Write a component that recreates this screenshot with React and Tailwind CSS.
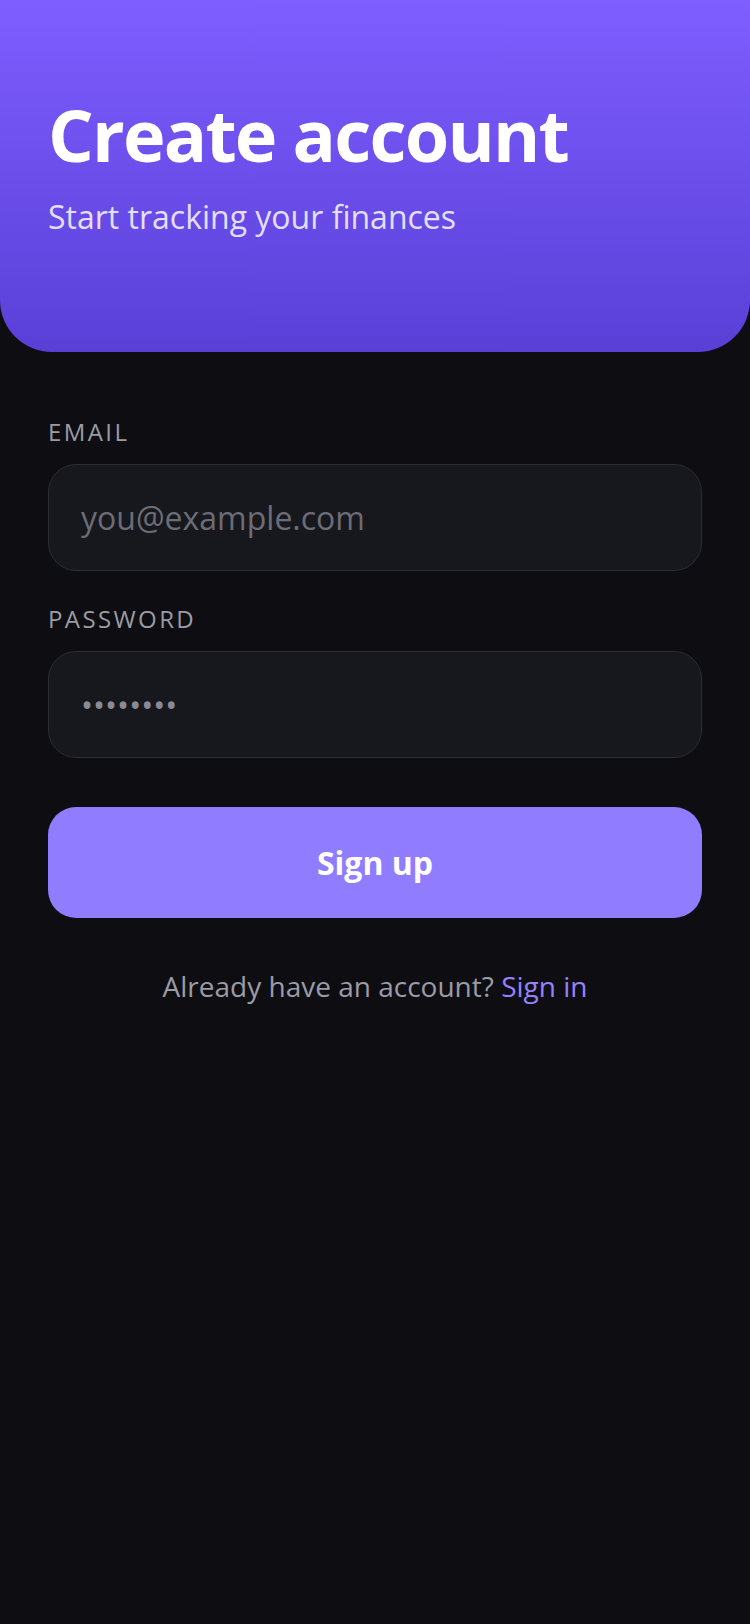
import { useState } from "react";

const SignUp = () => {
    const [email, setEmail] = useState("");
    const [password, setPassword] = useState("");

    return (
        <div className="min-h-[1624px] bg-[#0e0e12] font-['Open_Sans',sans-serif]">
            {/* Header */}
            <div className="h-[352px] rounded-b-[52px] bg-gradient-to-b from-[#7e5eff] to-[#5a3fd7] px-12 pt-[95px]">
                <h1 className="text-[72px] leading-[1.1] font-bold tracking-tight text-white">Create account</h1>
                <p className="mt-[23px] text-[32px] leading-[40px] text-[#e4dfff]">Start tracking your finances</p>
            </div>

            {/* Form */}
            <div className="px-12 pt-16">
                <label className="block mb-4 text-[24px] leading-[32px] tracking-widest text-[#9b9ba6]">EMAIL</label>
                <input
                    type="email"
                    value={email}
                    onChange={(e) => setEmail(e.target.value)}
                    placeholder="you@example.com"
                    className="w-full h-[107px] rounded-[28px] border border-[#2c2c33] bg-[#17181d] pl-8 text-[32px] text-white placeholder:text-[#6c6c76] outline-none"
                />

                <label className="block mt-8 mb-4 text-[24px] leading-[32px] tracking-widest text-[#9b9ba6]">PASSWORD</label>
                <input
                    type="password"
                    value={password}
                    onChange={(e) => setPassword(e.target.value)}
                    placeholder="••••••••"
                    className="w-full h-[107px] rounded-[28px] border border-[#2c2c33] bg-[#17181d] pl-8 text-[32px] text-white placeholder:text-[#8a8a96] outline-none"
                />

                <button className="mt-[49px] w-full h-[111px] rounded-[28px] bg-[#8f7cff] flex items-center justify-center text-[32px] leading-[40px] font-bold text-white">
                    Sign up
                </button>

                <p className="mt-[50px] text-center text-[28px] leading-[36px] text-[#9b9ba6]">
                    Already have an account? <span className="text-[#9580ff]">Sign in</span>
                </p>
            </div>
        </div>
    );
};

export default SignUp;
